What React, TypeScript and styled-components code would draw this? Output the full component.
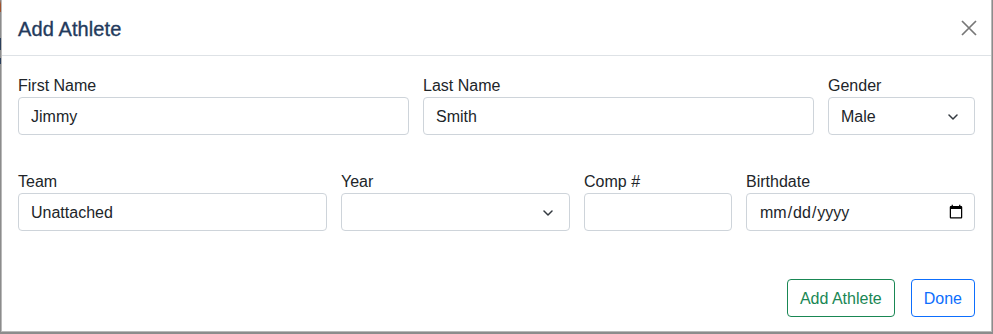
import React from "react";
import styled, { createGlobalStyle } from "styled-components";

const GlobalStyle = createGlobalStyle`
  html, body {
    margin: 0;
    padding: 0;
    background: #8c8c8c;
  }
  body {
    font-family: "Liberation Sans", Arial, sans-serif;
    color: #212529;
  }
  * { box-sizing: border-box; }
`;

const Page = styled.div`
  display: flex;
  align-items: flex-start;
  width: 993px;
  height: 334px;
  overflow: hidden;
`;

const EdgeStrip = styled.div`
  width: 1px;
  height: 334px;
  flex: none;
  background: linear-gradient(
    to bottom,
    #8c8c8c 0px,
    #a0522d 4px,
    #a0522d 12px,
    #8c8c8c 12px,
    #8c8c8c 38px,
    #2b3f5c 38px,
    #2b3f5c 50px,
    #8c8c8c 50px,
    #8c8c8c 58px,
    #2b3f5c 58px,
    #2b3f5c 64px,
    #8c8c8c 64px
  );
`;

const Modal = styled.div`
  width: 991px;
  flex: none;
  background: #fff;
  border: 1px solid #b9b9b9;
  border-top: none;
  display: flex;
  flex-direction: column;
`;

const Header = styled.div`
  display: flex;
  align-items: center;
  padding: 14px 14px 11px 16px;
  border-bottom: 1px solid #dee2e6;
`;

const Title = styled.h5`
  margin: 0;
  font-family: "Liberation Sans", Arial, sans-serif;
  font-size: 20px;
  line-height: 30px;
  font-weight: 400;
  letter-spacing: 0.1px;
  color: #233a5c;
  -webkit-text-stroke: 0.35px #233a5c;
`;

const CloseButton = styled.button`
  margin-left: auto;
  margin-top: -2px;
  width: 16px;
  height: 16px;
  padding: 0;
  border: none;
  background: transparent;
  display: flex;
  align-items: center;
  justify-content: center;
  cursor: pointer;
`;

const Body = styled.div`
  padding: 17px 16px 32px;
  display: flex;
  flex-direction: column;
  gap: 34px;
`;

const Row = styled.div<{ $cols: string }>`
  display: grid;
  grid-template-columns: ${(p) => p.$cols};
  column-gap: 14px;
`;

const Field = styled.div`
  display: flex;
  flex-direction: column;
  min-width: 0;
`;

const Label = styled.label`
  font-size: 16px;
  line-height: 22px;
  padding-top: 2px;
  color: #212529;
`;

const Input = styled.input`
  width: 100%;
  height: 38px;
  border: 1px solid #ced4da;
  border-radius: 4px;
  padding: 2px 12px 0;
  font-family: "Liberation Sans", Arial, sans-serif;
  font-size: 16px;
  color: #212529;
  background: #fff;
  outline: none;

  &::-webkit-calendar-picker-indicator {
    margin-right: -4px;
    margin-top: -2px;
  }
`;

const SelectWrap = styled.div`
  position: relative;
  width: 100%;
`;

const Select = styled.select`
  width: 100%;
  height: 38px;
  border: 1px solid #ced4da;
  border-radius: 4px;
  padding: 0 36px 0 12px;
  font-family: "Liberation Sans", Arial, sans-serif;
  font-size: 16px;
  color: #212529;
  background: #fff;
  appearance: none;
  -webkit-appearance: none;
  outline: none;
`;

const Chevron = styled.svg`
  position: absolute;
  right: 17px;
  top: 50%;
  margin-top: -2px;
  pointer-events: none;
`;

const Footer = styled.div`
  display: flex;
  justify-content: flex-end;
  align-items: center;
  gap: 16px;
  padding: 16px 16px 14px;
`;

const Button = styled.button<{ $color: string }>`
  height: 38px;
  padding: 2px 12px 0;
  font-family: "Liberation Sans", Arial, sans-serif;
  font-size: 16px;
  line-height: 24px;
  color: ${(p) => p.$color};
  border: 1px solid ${(p) => p.$color};
  border-radius: 4px;
  background: #fff;
  cursor: pointer;
`;

const ChevronIcon = () => (
  <Chevron width="10" height="6" viewBox="0 0 10 6">
    <path d="M1 1 L5 5 L9 1" fill="none" stroke="#343a40" strokeWidth="1.5" strokeLinecap="round" strokeLinejoin="round" />
  </Chevron>
);

export default function App() {
  return (
    <>
      <GlobalStyle />
      <Page>
        <EdgeStrip />
        <Modal>
          <Header>
            <Title>Add Athlete</Title>
            <CloseButton aria-label="Close">
              <svg width="16" height="16" viewBox="0 0 16 16">
                <path d="M1 1 L15 15 M15 1 L1 15" stroke="#777777" strokeWidth="1.7" />
              </svg>
            </CloseButton>
          </Header>
          <Body>
            <Row $cols="391px 391px 147px">
              <Field>
                <Label>First Name</Label>
                <Input type="text" defaultValue="Jimmy" />
              </Field>
              <Field>
                <Label>Last Name</Label>
                <Input type="text" defaultValue="Smith" />
              </Field>
              <Field>
                <Label>Gender</Label>
                <SelectWrap>
                  <Select defaultValue="Male">
                    <option>Male</option>
                    <option>Female</option>
                  </Select>
                  <ChevronIcon />
                </SelectWrap>
              </Field>
            </Row>
            <Row $cols="309px 229px 148px 229px">
              <Field>
                <Label>Team</Label>
                <Input type="text" defaultValue="Unattached" />
              </Field>
              <Field>
                <Label>Year</Label>
                <SelectWrap>
                  <Select defaultValue="">
                    <option value=""></option>
                    <option>FR</option>
                    <option>SO</option>
                    <option>JR</option>
                    <option>SR</option>
                  </Select>
                  <ChevronIcon />
                </SelectWrap>
              </Field>
              <Field>
                <Label>Comp #</Label>
                <Input type="text" />
              </Field>
              <Field>
                <Label>Birthdate</Label>
                <Input type="date" />
              </Field>
            </Row>
          </Body>
          <Footer>
            <Button $color="#198754">Add Athlete</Button>
            <Button $color="#0d6efd">Done</Button>
          </Footer>
        </Modal>
      </Page>
    </>
  );
}
